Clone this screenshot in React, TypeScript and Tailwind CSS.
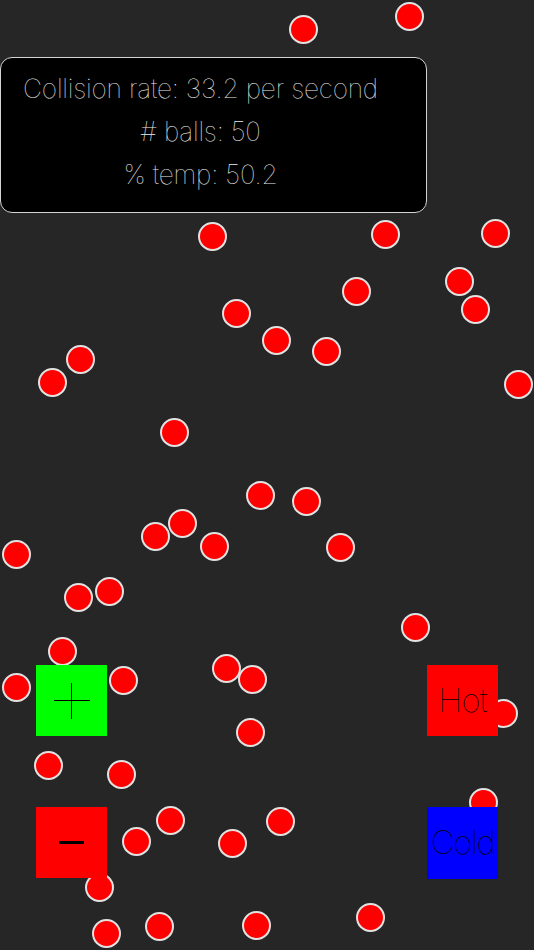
import React from "react";

const balls: [number, number][] = [
  [303, 29], [409, 16],
  [212, 236], [385, 234], [495, 233], [459, 281], [475, 309], [356, 291], [236, 313], [276, 340], [326, 351], [80, 359], [52, 382], [518, 384],
  [174, 432], [260, 495], [306, 501], [182, 523], [155, 536], [214, 546], [340, 547], [16, 554], [78, 597], [109, 591], [415, 627],
  [62, 651], [16, 687], [123, 680], [226, 668], [252, 679], [250, 732], [503, 713], [48, 765], [121, 774],
  [170, 820], [136, 841], [232, 843], [280, 821], [99, 887], [106, 933], [159, 926], [256, 925], [370, 917], [483, 802],
];

const font = { fontFamily: '"Inter", "Helvetica Neue", "Liberation Sans", sans-serif' };

export default function App() {
  return (
    <div className="relative w-[534px] h-[950px] overflow-hidden bg-[#262626]" style={font}>
      {balls.map(([x, y], i) => (
        <div
          key={i}
          className="absolute w-[29px] h-[29px] rounded-full bg-[#ff0000] border-2 border-[#e2e2e2]"
          style={{ left: x - 14.5, top: y - 14.5 }}
        />
      ))}

      <div className="absolute inset-0 flex flex-col">
        <div className="mt-[57px] w-[427px] h-[156px] rounded-[12px] border-[1.5px] border-[#d4d4d4] bg-black">
          <div className="w-[399px] pt-[9px] flex flex-col items-center text-[#ededed] font-thin text-[26.3px] leading-[43px] tracking-[-0.2px]">
            <div>Collision rate: 33.2 per second</div>
            <div># balls: 50</div>
            <div>% temp: 50.2</div>
          </div>
        </div>

        <div className="mt-auto px-[36px] pb-[71px] flex flex-col gap-[71px]">
          <div className="flex justify-between">
            <div className="w-[71px] h-[71px] bg-[#00ff00] flex items-center justify-center">
              <div className="relative w-[36px] h-[36px] flex items-center justify-center">
                <div className="w-[36px] h-[1.5px] bg-black" />
                <div className="absolute w-[1.5px] h-[36px] bg-black" />
              </div>
            </div>
            <div className="w-[71px] h-[71px] bg-[#ff0000] flex items-center justify-center text-black font-thin text-[33px] tracking-[-1px]">
              Hot
            </div>
          </div>
          <div className="flex justify-between">
            <div className="w-[71px] h-[71px] bg-[#ff0000] flex items-center justify-center">
              <div className="w-[25px] h-[3px] bg-black" />
            </div>
            <div className="w-[71px] h-[72px] bg-[#0000ff] flex items-center justify-center text-black font-thin text-[33px] tracking-[-1.5px]">
              Cold
            </div>
          </div>
        </div>
      </div>
    </div>
  );
}
